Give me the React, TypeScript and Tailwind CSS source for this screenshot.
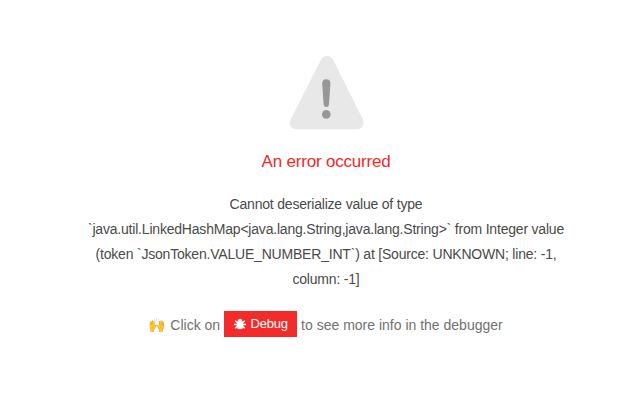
import React from "react";

function WarningTriangle() {
  return (
    <svg width="76" height="74" viewBox="0 0 76 74" className="ml-[2px] block shrink-0">
      <path d="M31.500 4.500C34-1.500 42-1.500 44.500 4.500L73.700 63Q75.700 68 73 71.200Q71.300 73.200 68 73.200H7.500Q4 73.200 2.200 71Q-.4 68 1.600 63.800Z" fill="#e8e8e8" />
      <path d="M33.200 27.500Q33.200 23.200 37.300 23.200Q41.400 23.200 41.400 27.500L40 48Q39.800 51 37.300 51Q34.800 51 34.600 48Z" fill="#979797" />
      <circle cx="37.300" cy="58.400" r="4.300" fill="#979797" />
    </svg>
  );
}

function BugIcon() {
  return (
    <svg width="12" height="12" viewBox="0 0 12 12" className="block shrink-0" fill="none">
      <rect x="2.700" y="3" width="6.600" height="8.300" rx="3" fill="currentColor" />
      <path d="M3.800 3.600V2.800Q3.800.8 6 .8Q8.200.8 8.200 2.800V3.600Z" fill="currentColor" />
      <path d="M3.600 4.600L1.200 2.700M8.400 4.600L10.800 2.700M3 6.500H0M9 6.500H12M3.500 8.400L1.200 10.300M8.500 8.400L10.800 10.300" stroke="currentColor" strokeWidth="1.400" />
    </svg>
  );
}

export default function App() {
  return (
    <main className="flex h-[401px] w-full flex-col items-center bg-white pt-[56px] pl-[25px] font-['Liberation_Sans',Arial,sans-serif]">
      <WarningTriangle />
      <h1 className="mt-5 text-[17px] leading-6 tracking-[-0.2px] text-[#ef2929]">An error occurred</h1>
      <p className="mt-[18px] w-[500px] text-center text-[14px] leading-[25px] tracking-[-0.2px] text-[#4a4a4a]">
        Cannot deserialize value of type<br />
        `java.util.LinkedHashMap&lt;java.lang.String,java.lang.String&gt;` from Integer value<br />
        (token `JsonToken.VALUE_NUMBER_INT`) at [Source: UNKNOWN; line: -1,<br />
        column: -1]
      </p>
      <div className="mt-[19px] flex h-[26px] items-center gap-1 whitespace-nowrap text-[14px] text-[#717171]">
        <span className="-ml-px flex items-center pt-0.5"><span className="mr-[5px]">🙌</span>Click on</span>
        <button className="flex h-[26px] w-[73px] items-center justify-center gap-1 bg-[#f32b2b] pl-px text-[13px] tracking-[-0.2px] text-white">
          <BugIcon />Debug
        </button>
        <span className="pt-0.5">to see more info in the debugger</span>
      </div>
    </main>
  );
}
